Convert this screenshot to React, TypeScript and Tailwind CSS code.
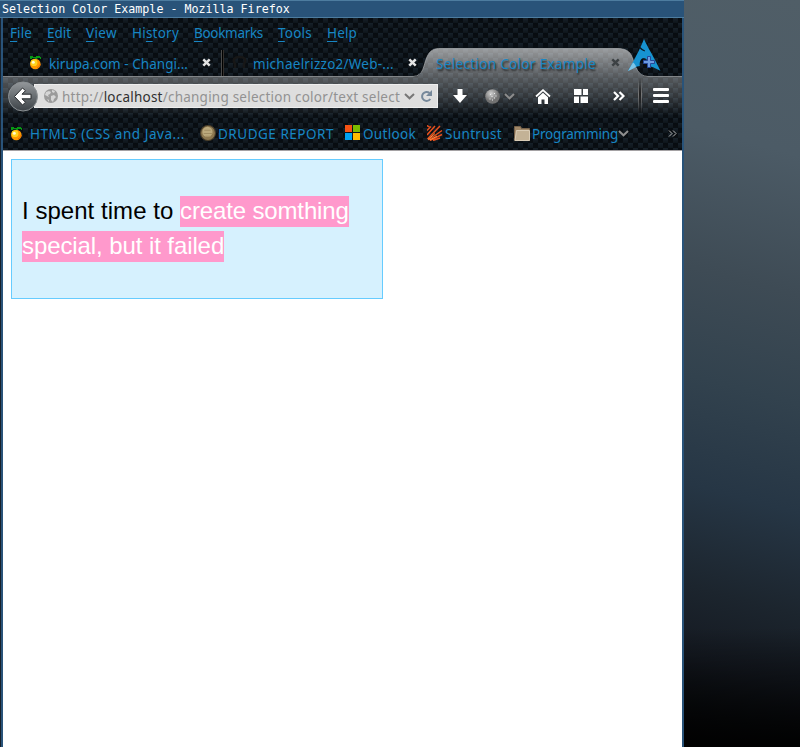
import { useLayoutEffect, useRef, useState } from "react";
import type { ReactNode } from "react";

// Single-line label whose tracking is adjusted so it fills the given width.
function Label({ children, width, className = "" }: { children: ReactNode; width: number; className?: string }) {
  const ref = useRef<HTMLSpanElement>(null);
  const [spacing, setSpacing] = useState(0);
  useLayoutEffect(() => {
    const el = ref.current;
    if (!el) return;
    el.style.letterSpacing = "0px";
    const natural = el.getBoundingClientRect().width;
    const count = (el.textContent || "").length;
    const next = (width - natural) / count;
    el.style.letterSpacing = `${next}px`;
    setSpacing(next);
  }, [width]);
  return (
    <span className="block shrink-0 whitespace-nowrap" style={{ width }}>
      <span ref={ref} className={`inline-block ${className}`} style={{ letterSpacing: spacing }}>
        {children}
      </span>
    </span>
  );
}

const menus: [string, string, string, number][] = [
  ["", "F", "ile", 22],
  ["", "E", "dit", 24],
  ["", "V", "iew", 31],
  ["Hi", "s", "tory", 47],
  ["", "B", "ookmarks", 69],
  ["", "T", "ools", 34],
  ["", "H", "elp", 30],
];

function Orange() {
  return (
    <svg width="13" height="15" viewBox="0 0 13 15" className="shrink-0">
      <circle cx="6.3" cy="9" r="5.3" fill="#ff9800" />
      <circle cx="5" cy="7.700" r="3.400" fill="#ffd21c" />
      <circle cx="4.300" cy="7.200" r="1.500" fill="#fffbd0" />
      <path d="M8 13c2-1 3-2 3.300-4" stroke="#e06a00" fill="none" />
      <path d="M1 1h3v1h3V1h4v1h1v2h-1V3H8v1H6V3H3v1H1z" fill="#079a12" />
    </svg>
  );
}

function Close({ color }: { color: string }) {
  return (
    <svg width="9" height="9" viewBox="0 0 9 9" className="shrink-0">
      <path d="M1.300 1.300l6.400 6.400M7.700 1.300L1.300 7.700" stroke={color} strokeWidth="2.500" />
    </svg>
  );
}

function Chevron({ color }: { color: string }) {
  return (
    <svg width="11" height="7" viewBox="0 0 11 7" className="shrink-0">
      <path d="M1 1l4.500 4.300L10 1" stroke={color} strokeWidth="2" fill="none" />
    </svg>
  );
}

function ArchLogo() {
  return (
    <svg width="33" height="33" viewBox="0 0 33 33" className="absolute left-[625px] top-[21px]">
      <path d="M16 0C13.500 6.500 9 16 0 32c5-3.200 8.500-4.400 11.800-5-.5-4 1-8 4-8s5 4 4.300 8c3.500.6 7 2 12.300 4.800C26 18 20 9 16 0z" fill="#1793d1" />
      <path d="M0 32l5-8.500c1.500 1 2.500 2.500 3 4.500C5.500 29.500 3.500 30.500 0 32z" fill="#7fc6e8" />
      <path d="M11.800 8.500c2 2.200 3.500 3 5 3.500" stroke="#0b1a24" strokeWidth="1.300" fill="none" />
      <path d="M19.500 17.500h3v4h4v3h-4v4h-3v-4h-4v-3h4z" fill="#6e9ce0" stroke="#25489a" />
    </svg>
  );
}

function ActiveTabShape() {
  return (
    <svg width="679" height="29" viewBox="0 0 679 29" className="absolute left-0 top-0">
      <defs>
        <linearGradient id="tab" x1="0" y1="0" x2="0" y2="1">
          <stop offset="0" stopColor="#fff" stopOpacity=".58" />
          <stop offset="1" stopColor="#fff" stopOpacity=".31" />
        </linearGradient>
      </defs>
      <path d="M411 29C421 28 420 18 424 9C427 2 431 0.500 438 0.500H614C622 0.500 627 3 629 9C633 19 634 28 645 29Z" fill="url(#tab)" />
      <path d="M0 28.500H410C421 28 420 18 424 9C427 2 431 0.500 438 0.500H614C622 0.500 627 3 629 9C633 19 634 28 645 28.500H679" stroke="#a8abad" strokeOpacity=".75" fill="none" />
    </svg>
  );
}

function Tabs() {
  return (
    <div className="relative h-[29px]">
      <ActiveTabShape />
      <div className="relative flex h-[29px] items-center pl-[26px]">
        <Orange />
        <div className="ml-[7px] pt-[2px]"><Label width={139}>kirupa.com - Changi...</Label></div>
        <div className="ml-[14px]"><Close color="#e4e4e4" /></div>
        <div className="ml-[10px] h-[26px] w-[3px] border-x border-l-[#494949] border-r-[#33302d] bg-black" />
        <svg width="15" height="15" viewBox="0 0 15 15" className="ml-[8px] shrink-0">
          <path d="M3 13V9C0 4 3 2 7.500 2S15 4 12 9v4" stroke="#171717" strokeWidth="2.500" fill="none" />
        </svg>
        <div className="ml-[6px] pt-[2px]"><Label width={141}>michaelrizzo2/Web-...</Label></div>
        <div className="ml-[14px]"><Close color="#e4e4e4" /></div>
        <div className="ml-[19px] pt-[2px]">
          <Label width={160} className="[text-shadow:1px_2px_2px_#222]">Selection Color Example</Label>
        </div>
        <div className="ml-[15px]"><Close color="#3c4144" /></div>
      </div>
    </div>
  );
}

function Reload() {
  return (
    <svg width="13" height="13" viewBox="0 0 13 13" className="shrink-0">
      <path d="M9.500 3A4.500 4.500 0 1 0 10.300 9" stroke="#76889a" strokeWidth="2" fill="none" />
      <path d="M12 0v6H6z" fill="#76889a" />
    </svg>
  );
}

function NavBar() {
  return (
    <div className="flex h-[38px] items-center bg-[linear-gradient(to_bottom,rgba(255,255,255,.31),rgba(255,255,255,.16)_55%,rgba(255,255,255,.01))] pl-[5px]">
      <svg width="31" height="31" viewBox="0 0 31 31" className="relative z-10 shrink-0">
        <defs>
          <linearGradient id="back" x1="0" y1="0" x2="0" y2="1">
            <stop offset="0" stopColor="#94989b" />
            <stop offset="1" stopColor="#3c4247" />
          </linearGradient>
        </defs>
        <circle cx="15" cy="15.500" r="14.500" fill="url(#back)" stroke="#8c9194" />
        <path d="M14.500 7L6.500 15.500l8 8.500 3-2.700-3.500-3.500h9v-4.600h-9l3.500-3.500z" fill="#fff" stroke="#25282b" />
      </svg>
      <div className="-ml-[5px] flex h-6 w-[404px] shrink-0 items-center border border-[#eeeeee] bg-[#dedede] pl-[9px]">
        <svg width="14" height="14" viewBox="0 0 14 14" className="shrink-0">
          <circle cx="7" cy="7" r="7" fill="#9b9b9b" />
          <path d="M2 3l3-1 2 1-1 2-2 1 1 2-2-1-2-1zM8 1l3 1-1 2-2-1zM7 7l3-1 2 2-2 2-1 3-2-2zM3 10l2 1v2z" fill="#d5d5d5" />
        </svg>
        <div className="ml-[4px] pt-[2px] text-[#929292]">
          <Label width={338}>http://<span className="text-[#303030]">localhost</span>/changing selection color/text select</Label>
        </div>
        <div className="ml-[4px]"><Chevron color="#777" /></div>
        <div className="ml-[5px]"><Reload /></div>
      </div>
      <svg width="14" height="14" viewBox="0 0 14 14" className="ml-[15px] shrink-0">
        <path d="M4.500 0h5v6H14l-7 8-7-8h4.500z" fill="#fff" />
      </svg>
      <svg width="15" height="15" viewBox="0 0 15 15" className="ml-[18px] shrink-0">
        <defs>
          <radialGradient id="ball" cx=".4" cy=".3">
            <stop offset="0" stopColor="#d0d0d0" />
            <stop offset="1" stopColor="#727272" />
          </radialGradient>
        </defs>
        <circle cx="7.500" cy="7.500" r="7.300" fill="url(#ball)" />
        <path d="M5 5.500h1M9 4.500h1M4.500 10h1M9 9h1M6.500 7.500h1M10.500 7h1M7 11h1" stroke="#ececec" />
      </svg>
      <div className="ml-[4px]"><Chevron color="#8c8c8c" /></div>
      <svg width="16" height="15" viewBox="0 0 16 15" className="ml-[20px] shrink-0">
        <path d="M1 7.500L8 1.200l7 6.300" stroke="#fff" strokeWidth="1.800" fill="none" />
        <path d="M3 8.200L8 3.800l5 4.400V15H9.500v-4.500h-3V15H3z" fill="#fff" />
      </svg>
      <svg width="14" height="14" viewBox="0 0 14 14" className="ml-[23px] shrink-0">
        <path d="M0 0h7.500v6H0zM9 0h5v6H9zM0 7.500h5V14H0zM6.500 7.500H14V14H6.500z" fill="#fff" />
      </svg>
      <svg width="12" height="10" viewBox="0 0 12 10" className="ml-[25px] shrink-0">
        <path d="M1 1l4 4-4 4M6.500 1l4 4-4 4" stroke="#fff" strokeWidth="2.200" fill="none" />
      </svg>
      <div className="ml-[13px] h-[36px] w-[4px] bg-[linear-gradient(to_right,#777_1px,#222_1px,#222_3px,#777_3px)] [mask-image:linear-gradient(to_bottom,transparent,#000_45%,transparent)]" />
      <div className="ml-[11px] flex flex-col gap-[2px] pb-px">
        <div className="h-[3px] w-4 rounded-[1px] bg-white" />
        <div className="mt-px h-[3px] w-4 rounded-[1px] bg-white" />
        <div className="mt-px h-[3px] w-4 rounded-[1px] bg-white" />
      </div>
    </div>
  );
}

function Bookmarks() {
  return (
    <div className="flex h-[36px] items-center border-b border-[#a5a2a4] pl-[7px] pt-[3px]">
      <div className="mb-[2px]"><Orange /></div>
      <div className="ml-[7px]"><Label width={155}>HTML5 (CSS and Java...</Label></div>
      <svg width="16" height="16" viewBox="0 0 15 15" className="mb-[2px] ml-[15px] shrink-0">
        <circle cx="7.500" cy="7.500" r="7" fill="#8d7850" stroke="#4a3e2a" />
        <circle cx="7" cy="6.500" r="4.800" fill="#bba97c" />
        <path d="M4 5h6M3.500 8h8M5 10.500h5" stroke="#a08c62" />
      </svg>
      <div className="ml-[2px]"><Label width={116}>DRUDGE REPORT</Label></div>
      <div className="mb-[3px] ml-[11px] grid h-[15px] w-[15px] shrink-0 grid-cols-2 gap-px">
        <i className="bg-[#f65314]" /><i className="bg-[#7cbb00]" />
        <i className="bg-[#00a1f1]" /><i className="bg-[#ffbb00]" />
      </div>
      <div className="ml-[3px]"><Label width={53}>Outlook</Label></div>
      <svg width="16" height="16" viewBox="0 0 16 16" className="mb-[2px] ml-[11px] shrink-0">
        <path d="M0 0.500l3 2M0 5.500L4 1.500M0 10L8 1M0.500 14L13 1M1.500 15L15 5.500M3 15.500l12-6M6 15.500l7-2.500" stroke="#e8501e" strokeWidth="1.500" />
        <path d="M1 14.500l7-6M3 15l7-4" stroke="#ff9140" />
      </svg>
      <div className="ml-[2px]"><Label width={57}>Suntrust</Label></div>
      <svg width="16" height="15" viewBox="0 0 16 15" className="mb-[2px] ml-[12px] shrink-0">
        <path d="M.5 .500h6l1 2h8v12H.5z" fill="#a08768" stroke="#77624a" />
        <path d="M2.500 4.500h13v10H1z" fill="#c3b296" stroke="#d9ccb6" />
      </svg>
      <div className="ml-[2px]"><Label width={86}>Programming</Label></div>
      <div className="mb-[2px]"><Chevron color="#8f8f8f" /></div>
      <svg width="9" height="7" viewBox="0 0 9 7" className="mb-[2px] ml-[39px] shrink-0">
        <path d="M1 .5l3 3-3 3M5 .5l3 3-3 3" stroke="#b5b5b5" fill="none" />
      </svg>
    </div>
  );
}

export default function App() {
  return (
    <div className="flex h-[747px] w-[800px] overflow-hidden">
      <div className="flex w-[684px] shrink-0 flex-col bg-[#295379]">
        <div className="h-[18px] border-y border-[#4d7c9f] pl-[2px] font-['DejaVu_Sans_Mono',monospace] text-[11.66px] leading-[16px] text-white">
          <span className="whitespace-nowrap">Selection Color Example - Mozilla Firefox</span>
        </div>
        <div className="flex flex-1 flex-col border-l border-r-2 border-l-[#17202a] border-r-[#295379] pl-[2px]">
          <div className="relative h-[133px] bg-[#0b1015] bg-[linear-gradient(to_bottom,rgba(11,16,21,0),rgba(11,16,21,.7)),repeating-conic-gradient(#080c10_0_25%,#17212a_0_50%)] bg-[length:10px_5px,10px_10px] font-['Noto_Sans',sans-serif] text-[13.5px] leading-[20px] text-[#1786c4]">
            <div className="flex h-[30px] items-center gap-[15px] pl-[7px]">
              {menus.map(([before, key, after, width]) => (
                <Label key={key + after} width={width}>
                  {before}
                  <span className="underline decoration-1 underline-offset-[3px]">{key}</span>
                  {after}
                </Label>
              ))}
            </div>
            <Tabs />
            <ArchLogo />
            <NavBar />
            <Bookmarks />
          </div>
          <div className="flex-1 bg-white px-2 pt-2">
            <div className="h-[140px] w-[372px] border border-[#66ccff] bg-[#d6f1fe] pl-[10px] pt-[33px] font-['Liberation_Sans',Arial,sans-serif] text-[24px] leading-[35px] text-black">
              <p className="whitespace-nowrap">
                <span className="tracking-[0.04px]">I spent time to </span>
                <span className="bg-[#ff99cc] pb-[3px] pt-[1px] tracking-[-0.14px] text-white">create somthing</span>
                <br />
                <span className="bg-[#ff99cc] pb-[3px] pt-[1px] tracking-[-0.09px] text-white">special, but it failed</span>
              </p>
            </div>
          </div>
        </div>
      </div>
      <div className="flex-1 bg-[linear-gradient(to_bottom,transparent_84%,rgba(0,0,0,.9)_100%),linear-gradient(195deg,#505e67,#4c5b66_20%,#3e4b55_38%,#32424e_52%,#263645_66%,#1c252e_79%,#151a22_88%,#07090a_99%)]" />
    </div>
  );
}
